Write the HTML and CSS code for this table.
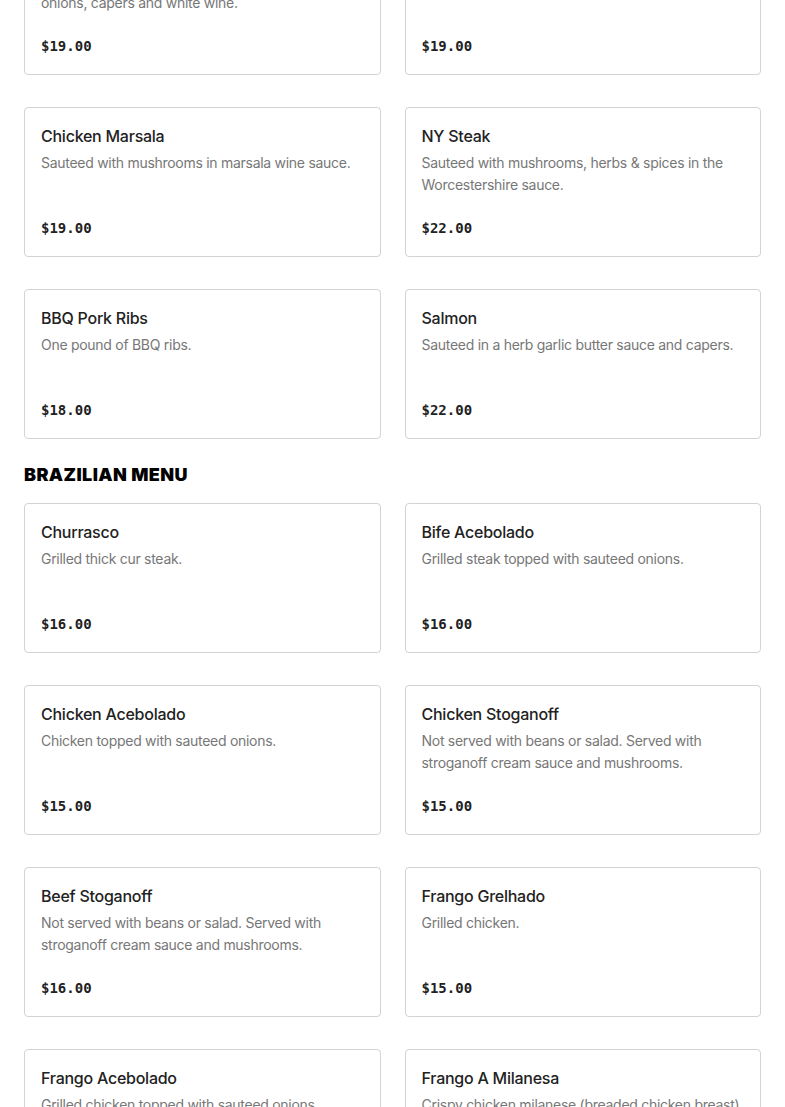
FILE: index.html
```html
<!DOCTYPE html>
<html lang="en">
<head>
<meta charset="utf-8">
<title>Menu</title>
<link rel="stylesheet" href="styles.css">
</head>
<body>
<main class="menu">
  <section class="section">
    <div class="grid">
      <article class="card">
        <h3 class="card-title">Chicken Piccata</h3>
        <p class="card-desc">Sauteed with artichokes in a lemon butter sauce, onions, capers and white wine.</p>
        <p class="card-price">$19.00</p>
      </article>
      <article class="card">
        <h3 class="card-title">Chicken Parmigiana</h3>
        <p class="card-desc">Breaded chicken topped with marinara.</p>
        <p class="card-price">$19.00</p>
      </article>
      <article class="card">
        <h3 class="card-title">Chicken Marsala</h3>
        <p class="card-desc">Sauteed with mushrooms in marsala wine sauce.</p>
        <p class="card-price">$19.00</p>
      </article>
      <article class="card">
        <h3 class="card-title">NY Steak</h3>
        <p class="card-desc">Sauteed with mushrooms, herbs &amp; spices in the Worcestershire sauce.</p>
        <p class="card-price">$22.00</p>
      </article>
      <article class="card">
        <h3 class="card-title">BBQ Pork Ribs</h3>
        <p class="card-desc">One pound of BBQ ribs.</p>
        <p class="card-price">$18.00</p>
      </article>
      <article class="card">
        <h3 class="card-title">Salmon</h3>
        <p class="card-desc">Sauteed in a herb garlic butter sauce and capers.</p>
        <p class="card-price">$22.00</p>
      </article>
    </div>
  </section>
  <section class="section">
    <h2 class="section-title">BRAZILIAN MENU</h2>
    <div class="grid">
      <article class="card">
        <h3 class="card-title">Churrasco</h3>
        <p class="card-desc">Grilled thick cur steak.</p>
        <p class="card-price">$16.00</p>
      </article>
      <article class="card">
        <h3 class="card-title">Bife Acebolado</h3>
        <p class="card-desc">Grilled steak topped with sauteed onions.</p>
        <p class="card-price">$16.00</p>
      </article>
      <article class="card">
        <h3 class="card-title">Chicken Acebolado</h3>
        <p class="card-desc">Chicken topped with sauteed onions.</p>
        <p class="card-price">$15.00</p>
      </article>
      <article class="card">
        <h3 class="card-title">Chicken Stoganoff</h3>
        <p class="card-desc">Not served with beans or salad. Served with stroganoff cream sauce and mushrooms.</p>
        <p class="card-price">$15.00</p>
      </article>
      <article class="card">
        <h3 class="card-title">Beef Stoganoff</h3>
        <p class="card-desc">Not served with beans or salad. Served with stroganoff cream sauce and mushrooms.</p>
        <p class="card-price">$16.00</p>
      </article>
      <article class="card">
        <h3 class="card-title">Frango Grelhado</h3>
        <p class="card-desc">Grilled chicken.</p>
        <p class="card-price">$15.00</p>
      </article>
      <article class="card">
        <h3 class="card-title">Frango Acebolado</h3>
        <p class="card-desc">Grilled chicken topped with sauteed onions.</p>
        <p class="card-price">$15.00</p>
      </article>
      <article class="card">
        <h3 class="card-title">Frango A Milanesa</h3>
        <p class="card-desc">Crispy chicken milanese (breaded chicken breast) with tomato sauce.</p>
        <p class="card-price">$15.00</p>
      </article>
    </div>
  </section>
</main>
</body>
</html>
```

FILE: styles.css
```css
html, body {
  margin: 0;
  padding: 0;
  background: #ffffff;
}

body {
  font-family: Inter, "Noto Sans", Roboto, sans-serif;
  color: #222222;
}

.menu {
  padding: 0 24px;
  margin-top: -75px;
}

.grid {
  display: grid;
  grid-template-columns: 1fr 1fr;
  column-gap: 24px;
  row-gap: 32px;
}

.section-title {
  margin: 24px 0 16px;
  font-family: Inter, "Liberation Sans", sans-serif;
  font-size: 18px;
  line-height: 24px;
  font-weight: 900;
  color: #000000;
  letter-spacing: 0.4px;
}

.card {
  box-sizing: border-box;
  height: 150px;
  border: 1px solid #d3d3d3;
  border-radius: 4px;
  padding: 16px 16px 18px;
  display: flex;
  flex-direction: column;
  background: #fff;
}

.card-title {
  margin: 0;
  font-size: 16px;
  line-height: 24px;
  font-weight: 500;
  letter-spacing: -0.25px;
  color: #222222;
}

.card-desc {
  margin: 4px 0 0;
  font-size: 14px;
  line-height: 22px;
  font-weight: 400;
  letter-spacing: -0.28px;
  color: #777777;
}

.card-price {
  margin: auto 0 0;
  font-family: "DejaVu Sans Mono", "Liberation Mono", monospace;
  font-size: 14px;
  line-height: 20px;
  font-weight: 700;
  color: #222222;
}
```
